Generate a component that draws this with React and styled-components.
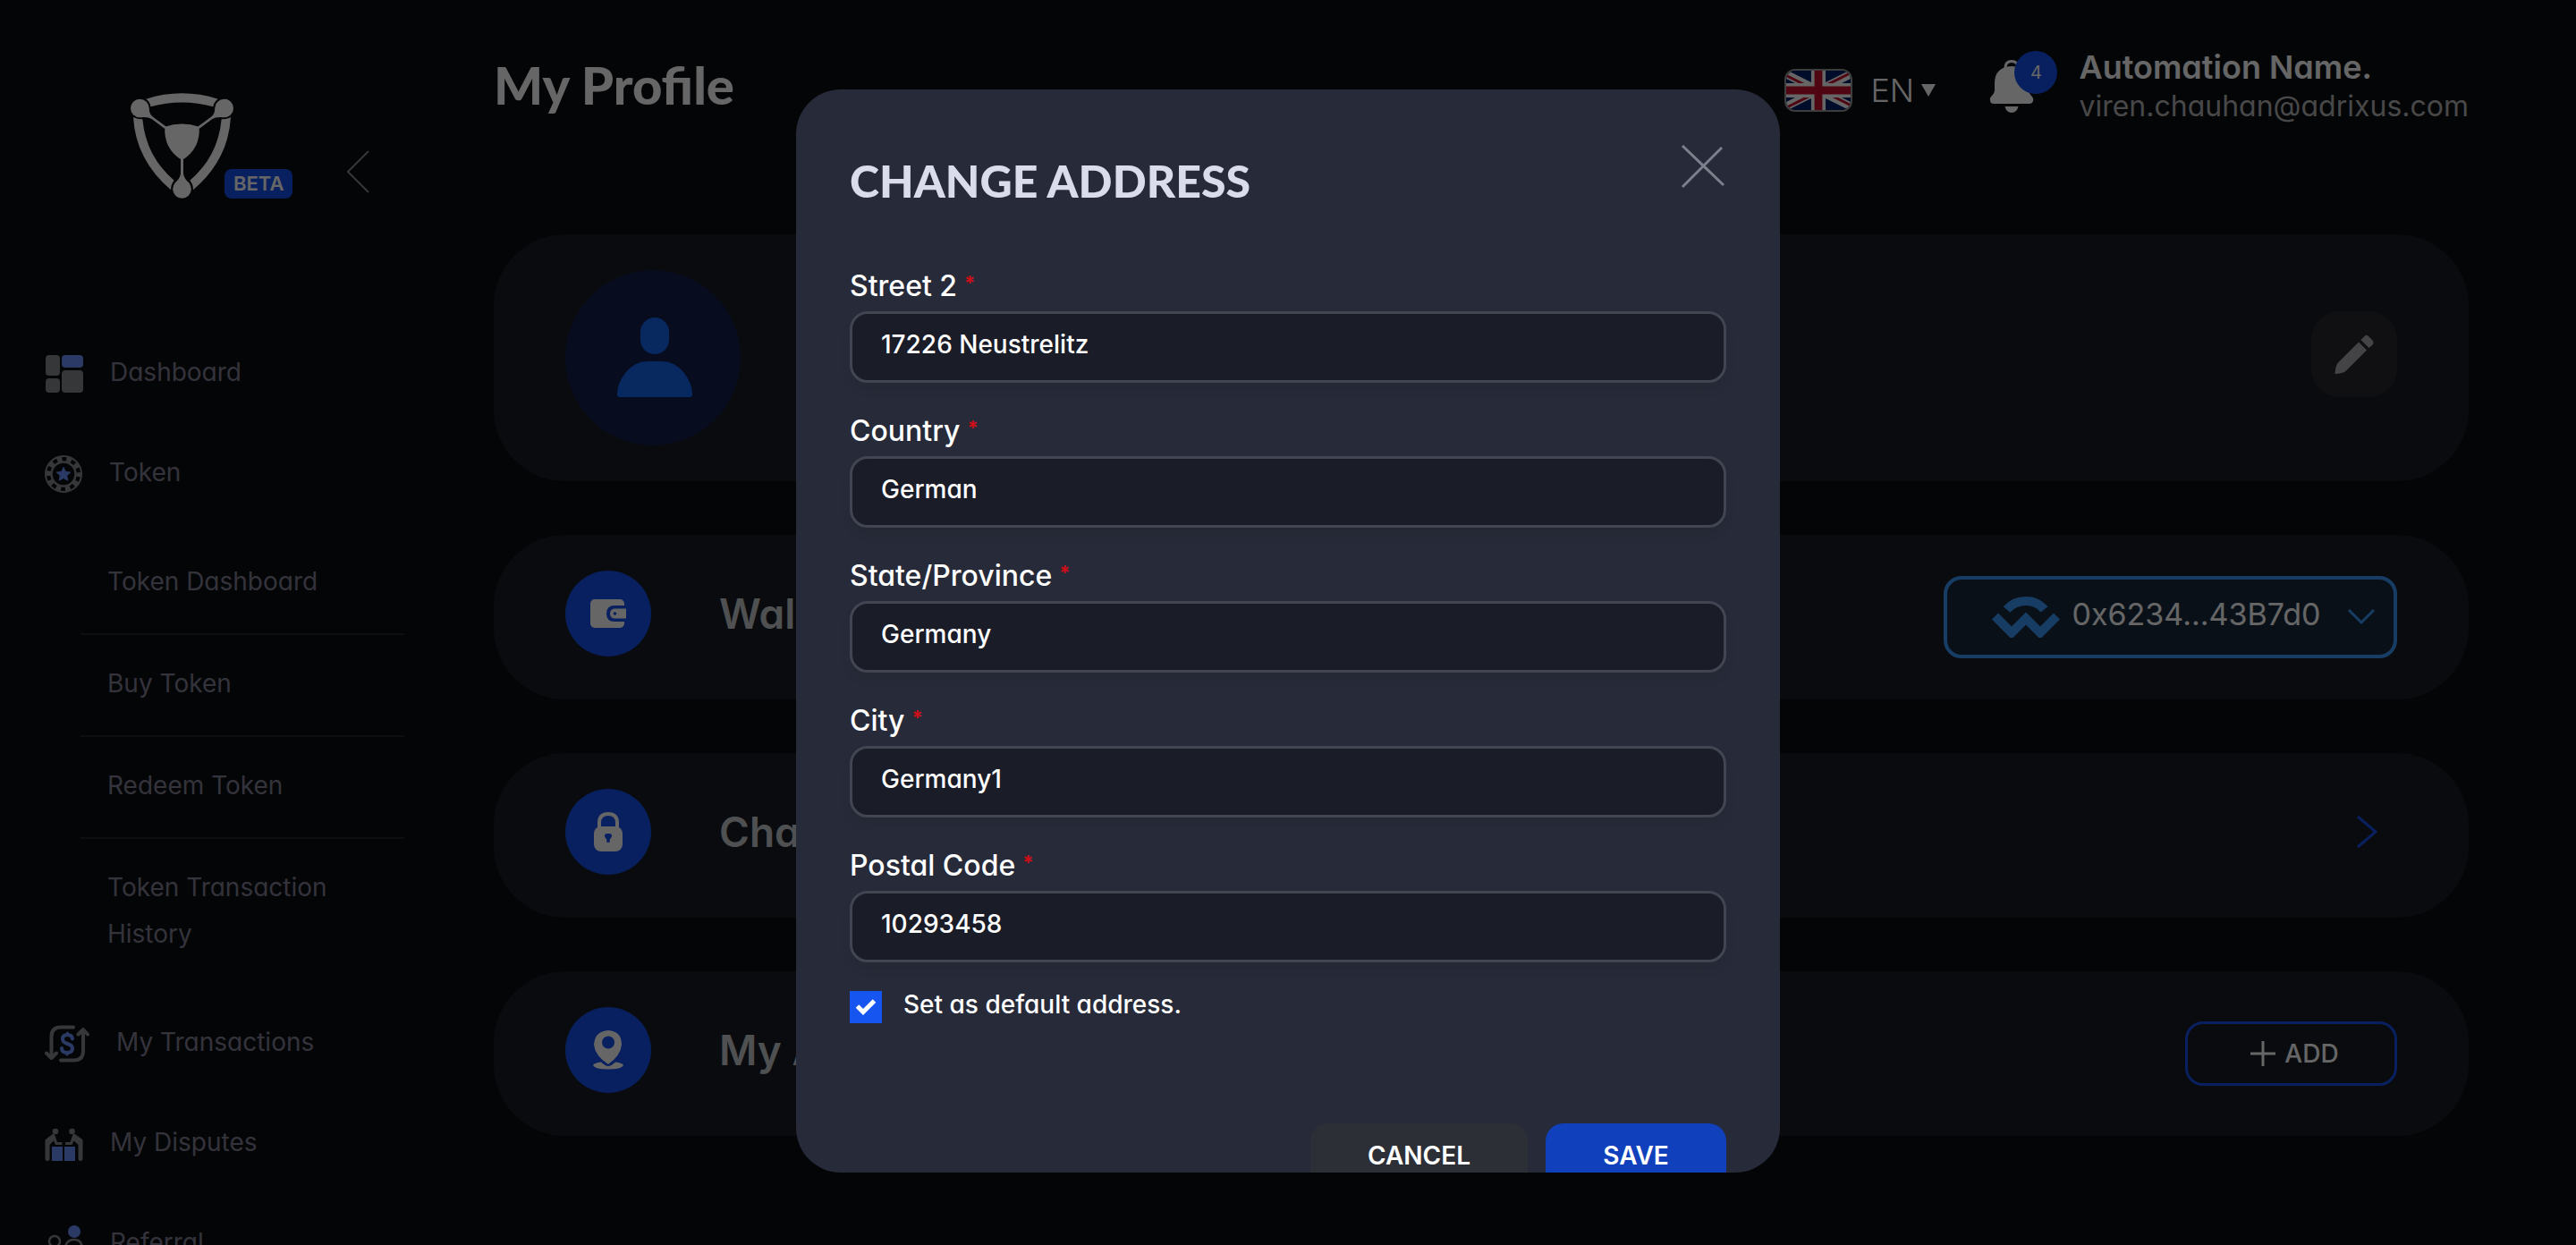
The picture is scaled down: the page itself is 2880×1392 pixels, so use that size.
import React, { useState } from "react";
import styled, { createGlobalStyle } from "styled-components";

const color = {
  page: "#0c0d12",
  card: "#191c23",
  blue: "#1652f0",
  sky: "#3b99fc",
  muted: "#827f94",
  iconGray: "#87898f",
  iconBlue: "#6991fa",
  modal: "#272a38",
  field: "#1a1c27",
  fieldBorder: "#424552",
};

const body = `Inter, "Liberation Sans", sans-serif`;
const display = `Lato, "Liberation Sans", sans-serif`;

const GlobalStyle = createGlobalStyle`
  *, *::before, *::after { box-sizing: border-box; }
  body {
    margin: 0;
    background: ${color.page};
    color: #fff;
    font-family: ${body};
    font-feature-settings: "cv11";
    overflow: hidden;
  }
  button, input, select {
    font: inherit;
    font-feature-settings: inherit;
    color: inherit;
  }
  button { cursor: pointer; }
  svg { display: block; flex: none; }
`;

const Page = styled.div`
  display: flex;
  height: 100vh;
  overflow: hidden;
`;

/* Sidebar */
const Sidebar = styled.aside`
  flex: none;
  width: 452px;
  padding: 104px 0 0 50px;
`;
const Brand = styled.div`
  display: flex;
  align-items: flex-end;
  height: 118px;
  padding-left: 96px;
`;
const Beta = styled.span`
  margin-left: -10px;
  padding: 0 10px;
  border-radius: 8px;
  background: ${color.blue};
  font-size: 22px;
  font-weight: 600;
  line-height: 33px;
`;
const Collapse = styled.button`
  margin: 0 0 5px 60px;
  padding: 0;
  border: 0;
  background: none;
`;
const Nav = styled.nav`
  display: flex;
  flex-direction: column;
  gap: 60px;
  padding-top: 168px;
`;
const NavLink = styled.a`
  display: flex;
  align-items: center;
  gap: 30px;
  height: 52px;
  color: ${color.muted};
  font-size: 28px;
  line-height: 52px;
  text-decoration: none;
  svg { margin-top: 4px; }
`;
const SubNav = styled.ul`
  margin: -18px 0 -23px 40px;
  padding: 0;
  list-style: none;
`;
const SubItem = styled.li`
  padding: 28px 30px 32px;
  border-bottom: 2px solid #27272b;
  &:last-child { border-bottom: 0; }
`;
const SubLink = styled.a`
  display: block;
  color: ${color.muted};
  font-size: 28px;
  line-height: 52px;
  text-decoration: none;
`;

/* Main column */
const Main = styled.main`
  flex: 1;
  min-width: 0;
  padding: 53px 120px 0 100px;
`;
const TopBar = styled.header`
  display: flex;
  align-items: center;
  justify-content: space-between;
  margin-bottom: 121px;
`;
const PageTitle = styled.h1`
  margin: 0;
  padding-bottom: 4px;
  font-family: ${display};
  font-size: 58px;
  font-weight: 900;
  line-height: 68px;
`;
const Tools = styled.div`
  display: flex;
  align-items: center;
`;
const Language = styled.label`
  display: flex;
  align-items: center;
  padding-top: 8px;
`;
const FlagFrame = styled.span`
  width: 76px;
  height: 48px;
  margin-right: 20px;
  border: 2px solid #99999c;
  border-radius: 12px;
  overflow: hidden;
`;
const LangSelect = styled.select`
  appearance: none;
  margin-right: 8px;
  padding: 0;
  border: 0;
  background: none;
  font-size: 36px;
  font-weight: 300;
  line-height: 44px;
`;
const Bell = styled.button`
  position: relative;
  margin: 0 50px 0 60px;
  padding: 0;
  border: 0;
  background: none;
`;
const Count = styled.span`
  position: absolute;
  top: -10px;
  left: 28px;
  width: 48px;
  border-radius: 24px;
  background: ${color.blue};
  font-size: 20px;
  line-height: 48px;
  text-align: center;
`;
const User = styled.div`
  min-width: 435px;
  line-height: 44px;
`;
const UserName = styled.div`
  font-size: 36px;
  font-weight: 600;
`;
const UserMail = styled.div`
  color: #b4b4b6;
  font-size: 32px;
`;

const Cards = styled.div`
  display: flex;
  flex-direction: column;
  gap: 60px;
`;
const Card = styled.section`
  display: flex;
  align-items: center;
  justify-content: space-between;
  padding: 40px 80px;
  border-radius: 80px;
  background: ${color.card};
`;
const Avatar = styled.div`
  display: flex;
  align-items: center;
  justify-content: center;
  width: 196px;
  height: 196px;
  padding-left: 4px;
  border-radius: 50%;
  background: #16204e;
`;
const CardLead = styled.div`
  display: flex;
  align-items: center;
  gap: 76px;
  margin-bottom: 8px;
`;
const Disc = styled.span`
  display: flex;
  align-items: center;
  justify-content: center;
  width: 96px;
  height: 96px;
  border-radius: 50%;
  background: ${color.blue};
`;
const CardTitle = styled.h2`
  margin: 0;
  color: #c6c7ca;
  font-size: 46px;
  font-weight: 600;
  line-height: 48px;
`;
const EditButton = styled.button`
  display: flex;
  align-items: center;
  justify-content: center;
  width: 96px;
  height: 96px;
  margin-bottom: 8px;
  padding: 0;
  border: 0;
  border-radius: 32px;
  background: #282a31;
`;
const WalletButton = styled.button`
  display: flex;
  align-items: center;
  height: 92px;
  padding: 0 20px 0 50px;
  border: 4px solid ${color.sky};
  border-radius: 20px;
  background: #192a3e;
  font-size: 34px;
`;
const Address = styled.span`
  min-width: 281px;
  margin: 0 28px 8px 12px;
`;
const OpenButton = styled.button`
  margin: 0 20px 8px 0;
  padding: 0;
  border: 0;
  background: none;
`;
const AddButton = styled.button`
  display: flex;
  align-items: center;
  justify-content: center;
  gap: 10px;
  width: 237px;
  height: 72px;
  padding: 0 6px 0 14px;
  border: 3px solid ${color.blue};
  border-radius: 20px;
  background: none;
  font-size: 28px;
  font-weight: 500;
`;

/* Address dialog */
const Backdrop = styled.div`
  position: fixed;
  inset: 0;
  display: flex;
  align-items: flex-start;
  justify-content: center;
  padding: 100px 20px 81px;
  background: rgba(0, 0, 0, 0.6);
`;
const Dialog = styled.form`
  width: 100%;
  max-width: 1100px;
  max-height: 100%;
  padding: 60px;
  border-radius: 50px;
  background: ${color.modal};
  overflow-y: auto;
  scrollbar-width: none;
`;
const DialogHead = styled.div`
  display: flex;
  align-items: flex-start;
  justify-content: space-between;
  margin-bottom: 68px;
`;
const DialogTitle = styled.h2`
  margin: 12px 0 0;
  color: #dadcec;
  font-family: ${display};
  font-size: 50px;
  font-weight: 900;
  line-height: 60px;
`;
const CloseButton = styled.button`
  padding: 0;
  border: 0;
  background: none;
`;
const Fields = styled.div`
  display: flex;
  flex-direction: column;
  gap: 34px;
`;
const Field = styled.div`
  display: flex;
  flex-direction: column;
  gap: 8px;
`;
const FieldLabel = styled.label`
  display: flex;
  align-items: flex-start;
  gap: 8px;
  font-size: 32px;
  font-weight: 500;
  line-height: 40px;
`;
const Required = styled.span`
  color: #cc0f19;
  font-size: 22px;
  font-weight: 700;
  line-height: 32px;
`;
const TextInput = styled.input`
  width: 100%;
  height: 80px;
  padding: 0 32px 6px;
  border: 3px solid ${color.fieldBorder};
  border-radius: 20px;
  outline: 0;
  background: ${color.field};
  box-shadow: 0 8px 12px rgba(0, 0, 0, 0.06);
  font-size: 28px;
  font-weight: 500;
`;
const CheckRow = styled.div`
  display: flex;
  align-items: flex-start;
  gap: 24px;
  margin-top: 32px;
  font-size: 28px;
  font-weight: 500;
  line-height: 30px;
`;
const CheckInput = styled.input`
  appearance: none;
  width: 36px;
  height: 36px;
  margin: 0;
  background: ${color.field};
  &:checked { background: #1655f0; }
`;
const CheckBox = styled.span`
  position: relative;
  display: block;
  height: 36px;
  svg {
    position: absolute;
    inset: 0;
    pointer-events: none;
  }
`;
const Actions = styled.div`
  display: flex;
  justify-content: flex-end;
  gap: 20px;
  margin-top: 112px;
`;
const ActionButton = styled.button`
  width: ${(p) => (p.$primary ? 202 : 243)}px;
  height: 72px;
  border: 0;
  border-radius: 20px;
  background: ${(p) => (p.$primary ? "#1040bc" : "#2d2f37")};
  font-size: 28px;
  font-weight: 600;
`;

/* Drawings */
const Logo = () => (
  <svg width="115" height="118" viewBox="438 131 345 354" fill="#fff">
    <path d="M490 151Q610 113 731 151Q717 161 715 177Q610 148 505 177Q504 160 490 151Z" />
    <path d="M447 212Q462 220 478 219Q490 345 584 424Q573 437 573 456Q455 355 447 212Z" />
    <path d="M774 212Q759 220 743 219Q731 345 637 424Q648 437 648 456Q766 355 774 212Z" />
    <circle cx="469" cy="182" r="31" />
    <circle cx="752" cy="182" r="31" />
    <circle cx="610.5" cy="453" r="31" />
    <path d="M500 180Q500 203 514 212L558 244L553 251L510 219Q496 210 472 213Z" />
    <path d="M721 180Q721 203 707 212L663 244L668 251L711 219Q725 210 749 213Z" />
    <path d="M606 350h9V402Q617 418 636 435H585Q604 418 606 402Z" />
    <path d="M553 244Q610 225 668 244Q673 318 610.500 356Q548 318 553 244Z" />
  </svg>
);

const DashboardIcon = () => (
  <svg width="43" height="42" viewBox="0 0 43 42" fill={color.iconGray}>
    <rect x="1" width="16" height="23" rx="4" />
    <rect x="1" y="26" width="16" height="16" rx="4" />
    <rect x="19" y="17" width="24" height="25" rx="4" />
    <rect x="19" width="24" height="14" rx="4" fill={color.iconBlue} />
  </svg>
);

const TokenIcon = () => (
  <svg width="42" height="42" viewBox="0 0 42 42" fill="none">
    <circle cx="21" cy="21" r="20" stroke={color.iconGray} strokeWidth="2" />
    <circle cx="21" cy="21" r="13.500" stroke={color.iconGray} strokeWidth="2.500" />
    <circle
      cx="21" cy="21" r="17" stroke={color.iconGray} strokeWidth="5.500"
      strokeDasharray="5.700 4.980" strokeDashoffset="2.500"
    />
    <path
      fill={color.iconBlue} stroke={color.iconBlue} strokeLinejoin="round"
      d="M21 13.500l2.300 5 5.400.6-4 3.700 1.100 5.400-4.800-2.700-4.800 2.700 1.100-5.400-4-3.700 5.400-.6z"
    />
  </svg>
);

const TransactionsIcon = () => (
  <svg
    width="50" height="42" viewBox="0 0 50 42" fill="none"
    stroke={color.iconGray} strokeWidth="4" strokeLinecap="round" strokeLinejoin="round"
  >
    <path d="M32 2.500H18Q7.500 2.500 7.500 13V35" />
    <path d="M2 31.500l5.500 5.500 5.500-5.500" />
    <path d="M18 39.500H32.500Q43 39.500 43 29V7" />
    <path d="M37.500 10.500L43 5l5 5.500" />
    <g stroke={color.iconBlue}>
      <path d="M31 15.500Q30.500 11 25.500 11Q20 11 20 15.500Q20 19.500 25.500 21Q31 22.500 31 26.500Q31 31 25 31Q19 31 19 26" />
      <path strokeWidth="3" d="M25.500 9v1M25 32v1" />
    </g>
  </svg>
);

const DisputesIcon = () => (
  <svg width="43" height="37" viewBox="0 0 43 37" fill={color.iconGray}>
    <circle cx="12" cy="4" r="3.300" />
    <circle cx="30.500" cy="4" r="3.300" />
    <path d="M9.500 6.500Q11.500 7 12 10L14 16h5.500v3H12L10 14.500 5.500 19V34.500a2.500 2.500 0 0 1-5 0V15Q0 14 1.500 12.500Z" />
    <path d="M33 6.500Q31 7 30.500 10L28.500 16H23v3h7.500l2-4.500L37.500 19V34.500a2.500 2.500 0 0 0 5 0V15Q43 14 41.500 12.500Z" />
    <path fill={color.iconBlue} d="M8 21h12v16H8zM22 21h12v16H22z" />
  </svg>
);

const ReferralIcon = () => (
  <svg width="43" height="42" viewBox="0 0 43 42" fill="none" stroke={color.iconGray} strokeWidth="2.500">
    <circle cx="33" cy="7" r="7" fill={color.iconBlue} stroke="none" />
    <circle cx="11" cy="18" r="6" />
    <path d="M23 27Q23 16 33 16Q42 16 42 27V34H24ZM1 41Q1 28 11 28Q21 28 21 41Z" />
  </svg>
);

const Flag = () => (
  <svg width="72" height="44" viewBox="0 0 60 30" preserveAspectRatio="xMidYMid slice">
    <path fill="#012169" d="M0 0h60v30H0z" />
    <path stroke="#fff" strokeWidth="6" d="M0 0l60 30M60 0L0 30" />
    <path stroke="#c8102e" strokeWidth="2" d="M0 1l28 14M60 -1L32 13M0 31l28-14M60 29L32 15" />
    <path stroke="#fff" strokeWidth="11" d="M30 0v30M0 15h60" />
    <path stroke="#c8102e" strokeWidth="6" d="M30 0v30M0 15h60" />
  </svg>
);

const Caret = () => (
  <svg width="16" height="14" viewBox="0 0 16 14">
    <path fill="#fff" d="M0 0h16L8 14z" />
  </svg>
);

const BellIcon = () => (
  <svg width="50" height="60" viewBox="0 0 50 60" fill="#fff">
    <path fill="none" stroke="#fff" strokeWidth="3" d="M18 9Q18 1.500 25 1.500T32 9" />
    <path d="M25 7Q44 8 44 26V34Q44 37 47 40Q50 43 49 46Q48 49 45 49H5Q1 49 1 45Q0 43 3 40Q6 37 6 34V26Q6 8 25 7Z" />
    <path d="M17.500 52h15Q31 59 25 59T17.500 52Z" />
  </svg>
);

const Person = () => (
  <svg width="84" height="90" viewBox="0 0 84 90" fill="#1464f0">
    <rect x="26" width="32" height="41" rx="16" />
    <path d="M34 49H50Q64 49 74 61Q84 73 84 86Q84 89 81 89H3Q0 89 0 86Q0 73 10 61Q20 49 34 49Z" />
  </svg>
);

const Pencil = () => (
  <svg width="44" height="44" viewBox="0 0 44 44" fill="#aaabae">
    <path d="M27 8.500L36 17.500L12.500 41Q9 43.500 0.500 44Q1 36 3.500 32Z" />
    <path d="M29.500 6L34 1.500Q36 0 38 2L42 6Q45 9.500 42 12L38.500 15Z" />
  </svg>
);

const WalletIcon = () => (
  <svg width="42" height="34" viewBox="0 0 42 34">
    <rect x="1" y="1" width="38" height="32" rx="5" fill="#fff" />
    <path fill={color.blue} d="M28 8H41V26H28Q19 26 19 17T28 8Z" />
    <path fill="#fff" d="M29 11.500H41V22.500H29Q23 22.500 23 17T29 11.500Z" />
    <circle cx="28.500" cy="17" r="1.800" fill={color.blue} />
  </svg>
);

const LockIcon = () => (
  <svg width="32" height="44" viewBox="0 0 32 44">
    <path fill="none" stroke="#fff" strokeWidth="4" d="M6 18V12Q6 2 16 2T26 12V18" />
    <rect y="16" width="32" height="28" rx="8" fill="#fff" />
    <path fill={color.blue} d="M12 26.500Q12 24 14.500 24h3Q20 24 20 26.500Q20 28.500 18 30L17.500 34h-3L14 30Q12 28.500 12 26.500Z" />
  </svg>
);

const PinIcon = () => (
  <svg width="34" height="44" viewBox="0 0 34 44" fill="#fff">
    <path fillRule="evenodd" d="M17 0Q32 1 32 16Q31 28 17 38Q2 28 1 16Q2 1 17 0ZM17 6.500a7 7 0 1 0 .1 0Z" />
    <path d="M9 35.500Q1 36.500 0 39Q2 43.500 17 43.500T34 39Q33 36.500 25 35.500Q20 40 17 40T9 35.500Z" />
  </svg>
);

const WalletConnect = () => (
  <svg width="76" height="46" viewBox="0 0 76 46" fill="none" stroke={color.sky} strokeWidth="10">
    <path d="M16.500 14.500Q25 5 38 5T58.500 14.500" />
    <path d="M3.500 22L22 40.500L38 24.500L54 40.500L72.500 22" />
  </svg>
);

const Line = ({ w, h, d, stroke, width = 2 }) => (
  <svg width={w} height={h} viewBox={`0 0 ${w} ${h}`} fill="none" stroke={stroke} strokeWidth={width}>
    <path d={d} />
  </svg>
);

const subLinks = ["Token Dashboard", "Buy Token", "Redeem Token", "Token Transaction History"];

const addressFields = [
  { id: "street2", label: "Street 2", value: "17226 Neustrelitz" },
  { id: "country", label: "Country", value: "German" },
  { id: "state", label: "State/Province", value: "Germany" },
  { id: "city", label: "City", value: "Germany1" },
  { id: "postal", label: "Postal Code", value: "10293458" },
];

const NavItem = ({ icon, children }) => (
  <NavLink href="#">
    {icon}
    {children}
  </NavLink>
);

const SettingCard = ({ icon, title, children }) => (
  <Card>
    <CardLead>
      <Disc>{icon}</Disc>
      <CardTitle>{title}</CardTitle>
    </CardLead>
    {children}
  </Card>
);

function AddressDialog() {
  const [isDefault, setDefault] = useState(true);
  return (
    <Backdrop>
      <Dialog role="dialog" aria-labelledby="dialog-title" onSubmit={(e) => e.preventDefault()}>
        <DialogHead>
          <DialogTitle id="dialog-title">CHANGE ADDRESS</DialogTitle>
          <CloseButton type="button" aria-label="Close">
            <Line w={52} h={52} d="M3 3L49 47M47 5L3 49" stroke="#7d7f8c" width={3} />
          </CloseButton>
        </DialogHead>
        <Fields>
          {addressFields.map((f) => (
            <Field key={f.id}>
              <FieldLabel htmlFor={f.id}>
                {f.label}
                <Required>*</Required>
              </FieldLabel>
              <TextInput id={f.id} type="text" defaultValue={f.value} />
            </Field>
          ))}
        </Fields>
        <CheckRow>
          <CheckBox>
            <CheckInput
              id="default-address"
              type="checkbox"
              checked={isDefault}
              onChange={(e) => setDefault(e.target.checked)}
            />
            {isDefault && (
              <svg width="36" height="36" viewBox="0 0 36 36">
                <path fill="none" stroke="#fff" strokeWidth="5" d="M8.500 17L15 23.500L27.500 11" />
              </svg>
            )}
          </CheckBox>
          <label htmlFor="default-address">Set as default address.</label>
        </CheckRow>
        <Actions>
          <ActionButton type="button">CANCEL</ActionButton>
          <ActionButton type="submit" $primary>SAVE</ActionButton>
        </Actions>
      </Dialog>
    </Backdrop>
  );
}

export default function App() {
  return (
    <>
      <GlobalStyle />
      <Page>
        <Sidebar>
          <Brand>
            <Logo />
            <Beta>BETA</Beta>
            <Collapse type="button" aria-label="Collapse menu">
              <Line w={26} h={50} d="M25 2L2 25L25 48" stroke="#87898f" />
            </Collapse>
          </Brand>
          <Nav>
            <NavItem icon={<DashboardIcon />}>Dashboard</NavItem>
            <NavItem icon={<TokenIcon />}>Token</NavItem>
            <SubNav>
              {subLinks.map((t) => (
                <SubItem key={t}>
                  <SubLink href="#">{t}</SubLink>
                </SubItem>
              ))}
            </SubNav>
            <NavItem icon={<TransactionsIcon />}>My Transactions</NavItem>
            <NavItem icon={<DisputesIcon />}>My Disputes</NavItem>
            <NavItem icon={<ReferralIcon />}>Referral</NavItem>
          </Nav>
        </Sidebar>
        <Main>
          <TopBar>
            <PageTitle>My Profile</PageTitle>
            <Tools>
              <Language>
                <FlagFrame><Flag /></FlagFrame>
                <LangSelect aria-label="Language" defaultValue="EN">
                  <option>EN</option>
                </LangSelect>
                <Caret />
              </Language>
              <Bell type="button" aria-label="Notifications">
                <BellIcon />
                <Count>4</Count>
              </Bell>
              <User>
                <UserName>Automation Name.</UserName>
                <UserMail>viren.chauhan@adrixus.com</UserMail>
              </User>
            </Tools>
          </TopBar>
          <Cards>
            <Card>
              <Avatar><Person /></Avatar>
              <EditButton type="button" aria-label="Edit profile"><Pencil /></EditButton>
            </Card>
            <SettingCard icon={<WalletIcon />} title="Wallet">
              <WalletButton type="button">
                <WalletConnect />
                <Address>0x6234...43B7d0</Address>
                <Line w={32} h={20} d="M2 2L16 16L30 2" stroke={color.sky} width={3} />
              </WalletButton>
            </SettingCard>
            <SettingCard icon={<LockIcon />} title="Change Password">
              <OpenButton type="button" aria-label="Change password">
                <Line w={26} h={38} d="M2 2L22 19L2 36" stroke={color.blue} width={3} />
              </OpenButton>
            </SettingCard>
            <SettingCard icon={<PinIcon />} title="My Address">
              <AddButton type="button">
                <Line w={28} h={28} d="M14 0V28M0 14H28" stroke="#fff" width={3} />
                ADD
              </AddButton>
            </SettingCard>
          </Cards>
        </Main>
      </Page>
      <AddressDialog />
    </>
  );
}
